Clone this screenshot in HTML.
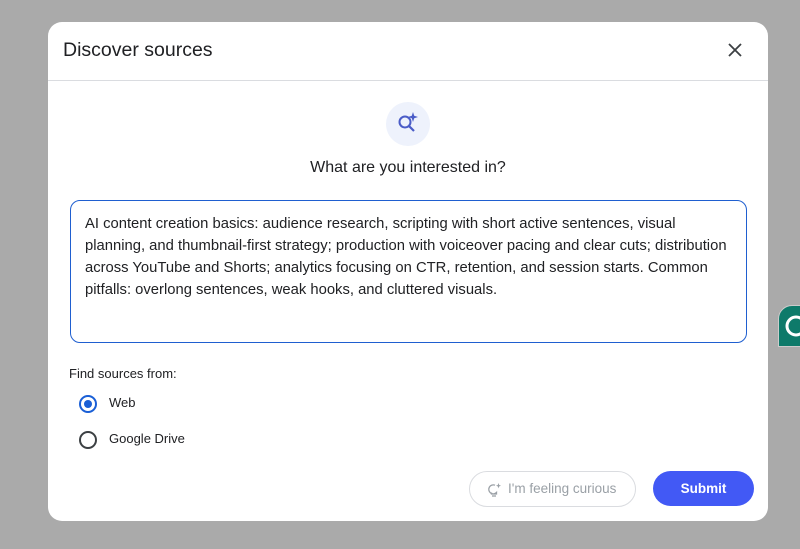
<!DOCTYPE html>
<html><head><style>
body{margin:0;width:800px;height:549px;background:#aaaaaa;font-family:"Liberation Sans",Arial,sans-serif;position:relative;overflow:hidden}
.dlg{position:absolute;left:48px;top:22px;width:720px;height:499px;background:#fff;border-radius:14px}
.title{position:absolute;left:15px;top:17px;font-size:19.5px;color:#202124}
.hr{position:absolute;left:0;right:0;top:58px;border-top:1px solid #dadce0}
.x{position:absolute;left:680px;top:21px}
.ic{position:absolute;left:338px;top:80px;width:44px;height:44px;border-radius:50%;background:#eef2fc}
.q{position:absolute;left:0;right:0;top:137px;text-align:center;font-size:16px;color:#202124}
.ta{position:absolute;left:22px;top:178px;width:677px;height:143px;border:1px solid #1f5fd0;border-radius:10px;padding:12px 12px 12px 14px;box-sizing:border-box;font-size:14.8px;line-height:22px;color:#202124}
.lbl{position:absolute;left:21px;top:344px;font-size:13px;color:#202124}
.r{position:absolute;left:31px;width:14px;height:14px;border:2px solid #3c4043;border-radius:50%}
.r.on{border-color:#1a5fd6}
.r.on::after{content:"";position:absolute;left:3px;top:3px;width:8px;height:8px;border-radius:50%;background:#1a5fd6}
.rl{position:absolute;left:61px;font-size:13px;color:#202124}
.cur{position:absolute;left:421px;top:449px;width:167px;height:36px;border:1px solid #dadce0;border-radius:18px;box-sizing:border-box;font-size:13.5px;color:#9aa0a6;line-height:34px;padding-left:38px}
.sub{position:absolute;left:605px;top:449px;width:101px;height:35px;border-radius:18px;background:#4259f5;color:#fff;font-weight:bold;font-size:13.5px;text-align:center;line-height:35px}
.g{position:absolute;left:778px;top:305px;width:30px;height:40px;background:#0e7a6a;border-radius:14px 0 0 0;border:1px solid #ccc}
</style></head><body>
<div class="dlg">
<div class="title">Discover sources</div>
<svg class="x" width="14" height="14" viewBox="0 0 14 14"><path d="M1 1L13 13M13 1L1 13" stroke="#3c4043" stroke-width="1.8"/></svg>
<div class="hr"></div>
<div class="ic"><svg width="44" height="44" viewBox="0 0 44 44"><circle cx="19" cy="20" r="5.5" fill="none" stroke="#4a5cc7" stroke-width="2"/><path d="M23 24L28 29" stroke="#4a5cc7" stroke-width="2.2"/><path d="M27 10L28.2 13.8L32 15L28.2 16.2L27 20L25.8 16.2L22 15L25.8 13.8Z" fill="#4a5cc7"/></svg></div>
<div class="q">What are you interested in?</div>
<div class="ta">AI content creation basics: audience research, scripting with short active sentences, visual planning, and thumbnail-first strategy; production with voiceover pacing and clear cuts; distribution across YouTube and Shorts; analytics focusing on CTR, retention, and session starts. Common pitfalls: overlong sentences, weak hooks, and cluttered visuals.</div>
<div class="lbl">Find sources from:</div>
<div class="r on" style="top:373px"></div><div class="rl" style="top:373px">Web</div>
<div class="r" style="top:409px"></div><div class="rl" style="top:409px">Google Drive</div>
<div class="cur"><svg style="position:absolute;left:16px;top:10px" width="16" height="16" viewBox="0 0 16 16"><path d="M9 3.2A4.5 4.5 0 1 0 10.5 10.5V12H5.5V10.5" fill="none" stroke="#9aa0a6" stroke-width="1.3"/><path d="M6 14H10" stroke="#9aa0a6" stroke-width="1.3"/><path d="M12.5 1L13.2 3L15 3.7L13.2 4.4L12.5 6.4L11.8 4.4L10 3.7L11.8 3Z" fill="#9aa0a6"/></svg>I'm feeling curious</div>
<div class="sub">Submit</div>
</div>
<div class="g"><svg width="30" height="40"><circle cx="17" cy="20" r="9" fill="none" stroke="#fff" stroke-width="3"/></svg></div>
</body></html>
